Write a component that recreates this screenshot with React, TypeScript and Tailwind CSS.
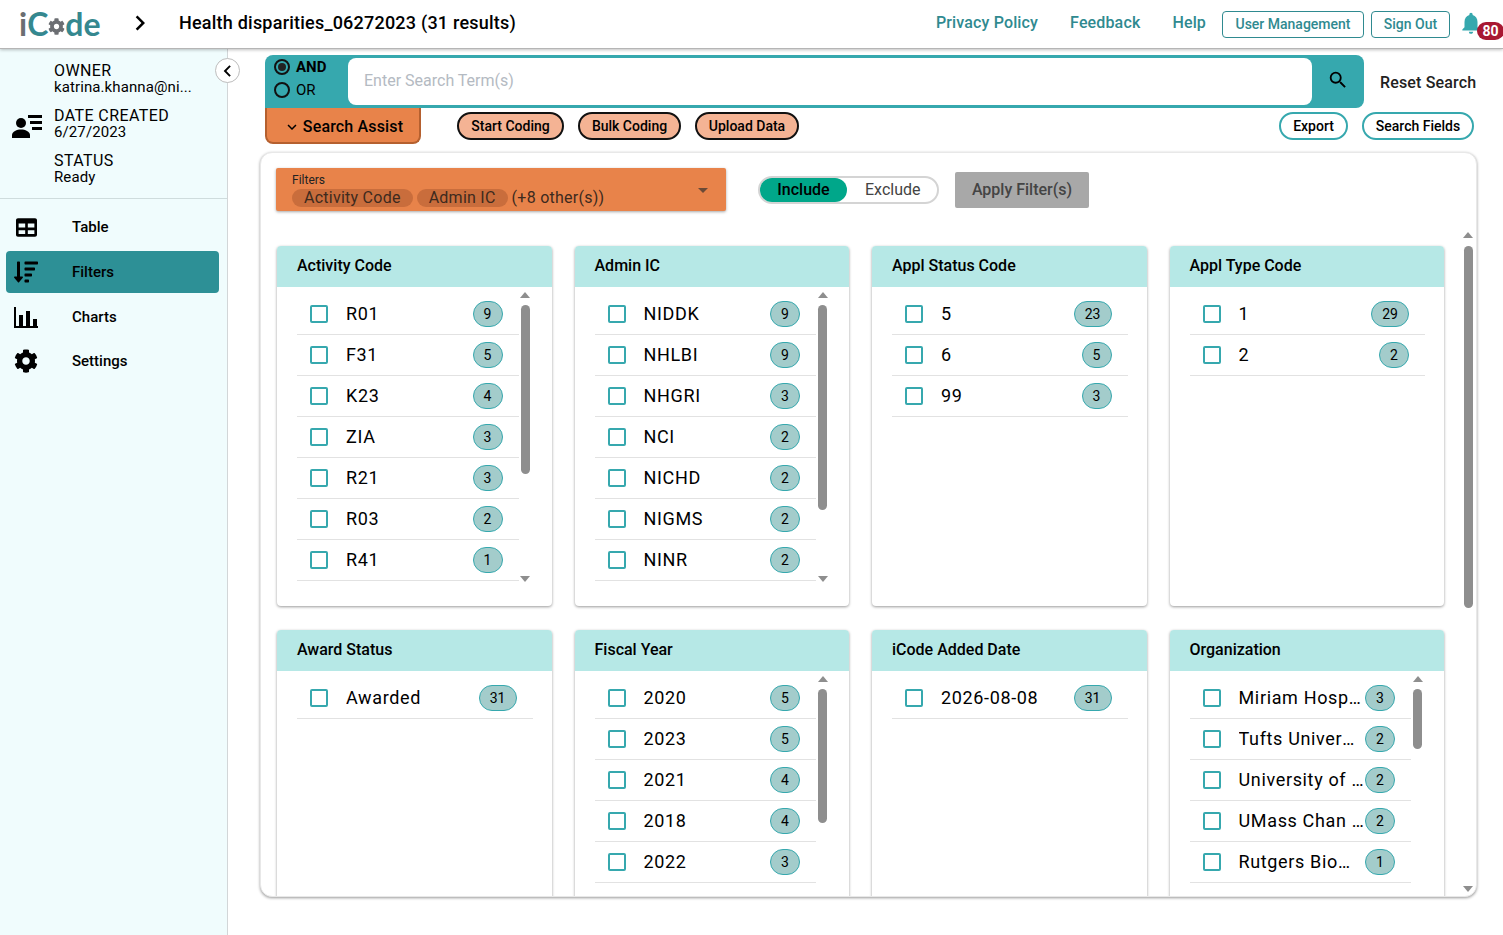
import React from 'react';
import { FaCog, FaTable, FaSortAmountDown } from 'react-icons/fa';
import { MdSearch, MdNotifications, MdKeyboardArrowDown, MdChevronLeft, MdChevronRight } from 'react-icons/md';

type Row = [string, number];

interface CardProps {
  title: string;
  rows: Row[];
  thumb?: string;
}

const cards: CardProps[] = [
  { title: 'Activity Code', thumb: 'h-[169px]', rows: [['R01', 9], ['F31', 5], ['K23', 4], ['ZIA', 3], ['R21', 3], ['R03', 2], ['R41', 1]] },
  { title: 'Admin IC', thumb: 'h-[205px]', rows: [['NIDDK', 9], ['NHLBI', 9], ['NHGRI', 3], ['NCI', 2], ['NICHD', 2], ['NIGMS', 2], ['NINR', 2]] },
  { title: 'Appl Status Code', rows: [['5', 23], ['6', 5], ['99', 3]] },
  { title: 'Appl Type Code', rows: [['1', 29], ['2', 2]] },
  { title: 'Award Status', rows: [['Awarded', 31]] },
  { title: 'Fiscal Year', thumb: 'h-[134px]', rows: [['2020', 5], ['2023', 5], ['2021', 4], ['2018', 4], ['2022', 3]] },
  { title: 'iCode Added Date', rows: [['2026-08-08', 31]] },
  { title: 'Organization', thumb: 'h-[60px]', rows: [['Miriam Hospital', 3], ['Tufts University', 2], ['University of Massachusetts', 2], ['UMass Chan Medical', 2], ['Rutgers Biomedical', 1]] },
];

const Logo = () => (
  <div className="flex items-center h-[48px] w-[125px] pl-[19px] font-['Lato',sans-serif] text-[32px] font-bold leading-none text-[#35888f]">
    <span className="text-[#6b6e72]">i</span>
    <span>C</span>
    <FaCog className="w-[17px] h-[17px] mt-[5px] text-[#6b6e72]" />
    <span>de</span>
  </div>
);

const PersonListIcon = () => (
  <svg viewBox="0 0 31 24" className="w-[31px] h-[24px] mt-[4px] ml-[1px] shrink-0" fill="#000">
    <circle cx="9" cy="9" r="5" />
    <path d="M0 24v-3c0-3.5 5-5.5 9-5.5s9 2 9 5.5v3z" />
    <rect x="16" y="1" width="14" height="3" />
    <rect x="18" y="7" width="12" height="3" />
    <rect x="20" y="13" width="10" height="3" />
  </svg>
);

const BarsIcon = () => (
  <svg viewBox="0 0 24 21" className="w-[24px] h-[21px]" fill="#000">
    <rect x="0" y="0" width="2" height="21" />
    <rect x="0" y="19" width="24" height="2" />
    <rect x="5" y="8" width="4" height="12" />
    <rect x="12" y="4" width="4" height="16" />
    <rect x="19" y="12" width="4" height="8" />
  </svg>
);

const NavItem = ({ icon, label, active, tight }: { icon: React.ReactNode; label: string; active?: boolean; tight?: boolean }) => (
  <div className={`flex items-center h-[42px] w-[213px] ml-[6px] rounded-[4px] text-[15px] font-medium text-black ${tight ? 'mt-[2px]' : 'mt-[3px]'} ${active ? 'bg-[#2d9096]' : ''}`}>
    <div className="w-[40px] flex justify-center text-black">{icon}</div>
    <span className="ml-[26px]">{label}</span>
  </div>
);

const Sidebar = () => (
  <aside className="relative w-[228px] shrink-0 bg-[#f0fcfd] border-r border-[#d2d6d8]">
    <div className="flex items-center h-[150px] border-b border-[#cfdcdd] pl-[11px]">
      <PersonListIcon />
      <div className="ml-[11px] text-black text-[15px] leading-[17px] tracking-[0.1px]">
        <div className="text-[16px] tracking-[0.4px]">OWNER</div>
        <div>katrina.khanna@ni...</div>
        <div className="text-[16px] tracking-[0.4px] mt-[11px]">DATE CREATED</div>
        <div>6/27/2023</div>
        <div className="text-[16px] tracking-[0.4px] mt-[11px]">STATUS</div>
        <div>Ready</div>
      </div>
    </div>
    <nav className="pt-[4px]">
      <NavItem icon={<FaTable className="w-[21px] h-[21px]" />} label="Table" />
      <NavItem active icon={<FaSortAmountDown className="w-[24px] h-[24px]" />} label="Filters" />
      <NavItem icon={<BarsIcon />} label="Charts" />
      <NavItem tight icon={<FaCog className="w-[24px] h-[24px]" />} label="Settings" />
    </nav>
    <button className="absolute left-[215px] top-[9px] w-[25px] h-[25px] rounded-full bg-white border border-[#bdbdbd] flex items-center justify-center">
      <MdChevronLeft className="w-[26px] h-[26px] text-black" />
    </button>
  </aside>
);

const Header = () => (
  <header className="relative z-10 flex items-center h-[49px] bg-white border-b border-[#b5b5b5] shadow-[0_1px_3px_rgba(0,0,0,0.25)]">
    <Logo />
    <MdChevronRight className="w-[30px] h-[30px] mb-[3px] text-black" />
    <h1 className="ml-[24px] mb-[3px] text-[18px] tracking-[0.22px] font-medium text-black">Health disparities_06272023 (31 results)</h1>
    <div className="flex-1" />
    <div className="flex items-center text-[16px] tracking-[0.15px] font-medium text-[#2f8a90]">
      <a className="mr-[32px] mb-[2px]">Privacy Policy</a>
      <a className="mr-[32px] mb-[2px]">Feedback</a>
      <a className="mr-[16px] mb-[2px]">Help</a>
      <button className="h-[27px] w-[142px] mr-[7px] border border-[#2f8a90] rounded-[4px] text-[14px] tracking-normal">User Management</button>
      <button className="h-[27px] w-[79px] border border-[#2f8a90] rounded-[4px] text-[14px] tracking-normal">Sign Out</button>
    </div>
    <div className="relative w-[53px] h-[48px]">
      <MdNotifications className="absolute left-[8px] top-[10px] w-[26px] h-[26px] text-[#36a8ae]" />
      <span className="absolute left-[27px] top-[22px] w-[27px] h-[18px] rounded-full bg-[#a81832] text-white text-[14px] font-bold leading-[18px] text-center">80</span>
    </div>
  </header>
);

const Radio = ({ label, checked }: { label: string; checked?: boolean }) => (
  <label className={`flex items-center gap-[6px] text-[15px] h-[23px] text-black ${checked ? 'font-bold' : ''}`}>
    <span className="w-[16px] h-[16px] rounded-full border-2 border-[#111] flex items-center justify-center">
      {checked && <span className="w-[8px] h-[8px] rounded-full bg-[#222]" />}
    </span>
    {label}
  </label>
);

const SearchBar = () => (
  <div className="flex items-center">
    <div className="flex items-center w-[1099px] h-[53px] bg-[#36a8ae] rounded-t-[8px] rounded-br-[8px]">
      <div className="w-[83px] pl-[9px] mb-[6px]">
        <Radio label="AND" checked />
        <Radio label="OR" />
      </div>
      <div className="flex items-center h-[47px] w-[964px] bg-white rounded-[8px] pl-[16px] pb-[2px] text-[16px] text-[#b4bac2]">Enter Search Term(s)</div>
      <div className="flex-1 flex justify-center mb-[4px]">
        <MdSearch className="w-[22px] h-[22px] text-black" />
      </div>
    </div>
    <button className="ml-[16px] text-[16px] tracking-[0.15px] font-medium text-[#222] mt-[3px]">Reset Search</button>
  </div>
);

const Pill = ({ label, className }: { label: string; className: string }) => (
  <button className={`h-[28px] rounded-full border-2 text-[14px] font-medium text-black ${className}`}>{label}</button>
);

const ActionRow = () => (
  <div className="flex items-start h-[44px]">
    <button className="flex items-center justify-center w-[156px] h-[36px] pt-[3px] bg-[#e8834a] border-2 border-t-0 border-[#b5602f] rounded-b-[8px] text-[16px] tracking-[0.15px] font-medium text-black">
      <MdKeyboardArrowDown className="w-[18px] h-[18px] mr-[2px]" />
      Search Assist
    </button>
    <div className="flex gap-[14px] ml-[36px] mt-[4px]">
      <Pill label="Start Coding" className="w-[107px] bg-[#f4b394] border-[#111]" />
      <Pill label="Bulk Coding" className="w-[103px] bg-[#f4b394] border-[#111]" />
      <Pill label="Upload Data" className="w-[104px] bg-[#f4b394] border-[#111]" />
    </div>
    <div className="flex gap-[14px] ml-[480px] mt-[4px]">
      <Pill label="Export" className="w-[69px] bg-white border-[#36a8ae]" />
      <Pill label="Search Fields" className="w-[112px] bg-white border-[#36a8ae]" />
    </div>
  </div>
);

const FilterBar = () => (
  <div className="flex items-start h-[93px] pl-[15px] pt-[15px]">
    <div className="relative w-[450px] h-[43px] bg-[#e8834a] rounded-[2px] shadow-[0_1px_3px_rgba(0,0,0,0.35)] pl-[16px] pt-[5px]">
      <div className="text-[12px] leading-[14px] mb-[2px] text-[#222]">Filters</div>
      <div className="flex items-center gap-[4px] text-[16px] tracking-[0.25px] leading-[18px] text-[#3d2a1e]">
        <span className="px-[12px] rounded-full bg-[#c96d3c]">Activity Code</span>
        <span className="px-[12px] rounded-full bg-[#c96d3c]">Admin IC</span>
        <span>(+8 other(s))</span>
      </div>
      <span className="absolute right-[18px] top-[20px] w-0 h-0 border-x-[5px] border-x-transparent border-t-[5px] border-t-[#6b4a36]" />
    </div>
    <div className="flex items-center w-[181px] h-[28px] ml-[32px] mt-[8px] rounded-full border-2 border-[#d4d4d4] bg-white text-[16px] font-medium">
      <span className="flex items-center justify-center w-[87px] h-[24px] rounded-full bg-[#00a78a] text-black">Include</span>
      <span className="ml-[18px] font-normal text-[#444]">Exclude</span>
    </div>
    <button className="w-[134px] h-[36px] ml-[16px] mt-[4px] rounded-[2px] bg-[#a8a8a8] text-[16px] font-medium text-[#444]">Apply Filter(s)</button>
  </div>
);

const Badge = ({ n }: { n: number }) => (
  <span className={`flex items-center justify-center shrink-0 h-[26px] rounded-full bg-[#a3cccb] border border-[#36a8ae] text-[14px] text-black ${n > 9 ? 'w-[38px]' : 'w-[30px]'}`}>{n}</span>
);

const ListRow = ({ label, n }: { label: string; n: number }) => (
  <div className="flex items-center h-[41px] border-b border-[#e2e2e2] pl-[13px] pr-[16px]">
    <span className="w-[18px] h-[18px] shrink-0 rounded-[2px] border-2 border-[#36a8ae]" />
    <span className="flex-1 min-w-0 truncate ml-[18px] mr-[1px] mb-[2px] text-[18px] tracking-[0.65px] text-black">{label}</span>
    <Badge n={n} />
  </div>
);

const ScrollTrack = ({ thumb }: { thumb: string }) => (
  <div className="absolute right-[21px] top-[46px] w-[11px] h-[290px] flex flex-col items-center">
    <span className="w-0 h-0 border-x-[5px] border-x-transparent border-b-[6px] border-b-[#8e8e8e]" />
    <span className={`w-[9px] mt-[7px] rounded-full bg-[#8e8e8e] ${thumb}`} />
    <span className="absolute bottom-0 w-0 h-0 border-x-[5px] border-x-transparent border-t-[6px] border-t-[#8e8e8e]" />
  </div>
);

const FilterCard = ({ title, rows, thumb }: CardProps) => (
  <div className="relative h-[360px] bg-white rounded-[4px] shadow-[0_1px_3px_rgba(0,0,0,0.4)] overflow-hidden">
    <div className="flex items-center h-[41px] pl-[20px] pb-[2px] bg-[#b6e8e6] text-[16px] font-medium text-black">{title}</div>
    <div className={`pl-[20px] pt-[7px] ${thumb ? 'pr-[33px]' : 'pr-[19px]'}`}>
      {rows.map(([label, n]) => <ListRow key={label} label={label} n={n} />)}
    </div>
    {thumb && <ScrollTrack thumb={thumb} />}
  </div>
);

const ResultsPanel = () => (
  <section className="relative w-[1217px] h-[745px] bg-white rounded-[12px] border border-[#e8e8e8] shadow-[0_1px_3px_rgba(0,0,0,0.4)] overflow-hidden">
    <FilterBar />
    <div className="grid grid-cols-4 gap-x-[23px] gap-y-[24px] w-[1167px] ml-[16px]">
      {cards.map((c) => <FilterCard key={c.title} {...c} />)}
    </div>
    <div className="absolute right-[2px] top-[79px] w-[12px] h-[660px] flex flex-col items-center">
      <span className="w-0 h-0 border-x-[5px] border-x-transparent border-b-[6px] border-b-[#8e8e8e]" />
      <span className="w-[9px] h-[362px] mt-[8px] rounded-full bg-[#8e8e8e]" />
      <span className="absolute bottom-0 w-0 h-0 border-x-[5px] border-x-transparent border-t-[6px] border-t-[#8e8e8e]" />
    </div>
  </section>
);

export default function App() {
  return (
    <div className="w-[1503px] h-[935px] overflow-hidden flex flex-col bg-white font-['Roboto',sans-serif]">
      <Header />
      <div className="flex flex-1 min-h-0">
        <Sidebar />
        <main className="flex-1 min-w-0">
          <div className="pl-[37px] pt-[6px]">
            <SearchBar />
            <ActionRow />
          </div>
          <div className="pl-[32px]">
            <ResultsPanel />
          </div>
        </main>
      </div>
    </div>
  );
}
